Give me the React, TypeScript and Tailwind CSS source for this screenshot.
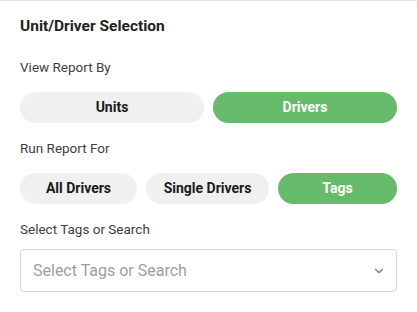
import { ChevronDown } from "lucide-react";

const pill = "h-[31px] rounded-full text-[14px] font-bold flex items-center justify-center";
const off = "bg-[#f0f0f0] text-[#1a1a1a]";
const on = "bg-[#66bb6a] text-white";

export default function App() {
  return (
    <div className="w-[417px] h-[312px] bg-white border-t border-[#e2e2e2] px-5 pt-[15px] font-['Roboto',sans-serif]">
      <h2 className="text-[15.5px] leading-5 font-bold text-[#222]">Unit/Driver Selection</h2>

      <div className="mt-[21px] text-[13.5px] leading-5 text-[#3d3d45]">View Report By</div>
      <div className="mt-[15px] flex gap-[9px]">
        <button className={`${pill} ${off} flex-1`}>Units</button>
        <button className={`${pill} ${on} flex-1`}>Drivers</button>
      </div>

      <div className="mt-[15px] text-[13.5px] leading-5 text-[#3d3d45]">Run Report For</div>
      <div className="mt-[15px] flex gap-[9px]">
        <button className={`${pill} ${off} w-[117px]`}>All Drivers</button>
        <button className={`${pill} ${off} w-[123px]`}>Single Drivers</button>
        <button className={`${pill} ${on} flex-1`}>Tags</button>
      </div>

      <div className="mt-[15px] text-[13.5px] leading-5 text-[#3d3d45]">Select Tags or Search</div>
      <div className="mt-[10px] h-[43px] border border-[#d6d6d6] rounded-[4px] flex items-center pl-3 pr-[10px]">
        <span className="flex-1 text-[16px] text-[#9e9e9e]">Select Tags or Search</span>
        <ChevronDown size={14} strokeWidth={2} className="text-[#6b7a8f]" />
      </div>
    </div>
  );
}
